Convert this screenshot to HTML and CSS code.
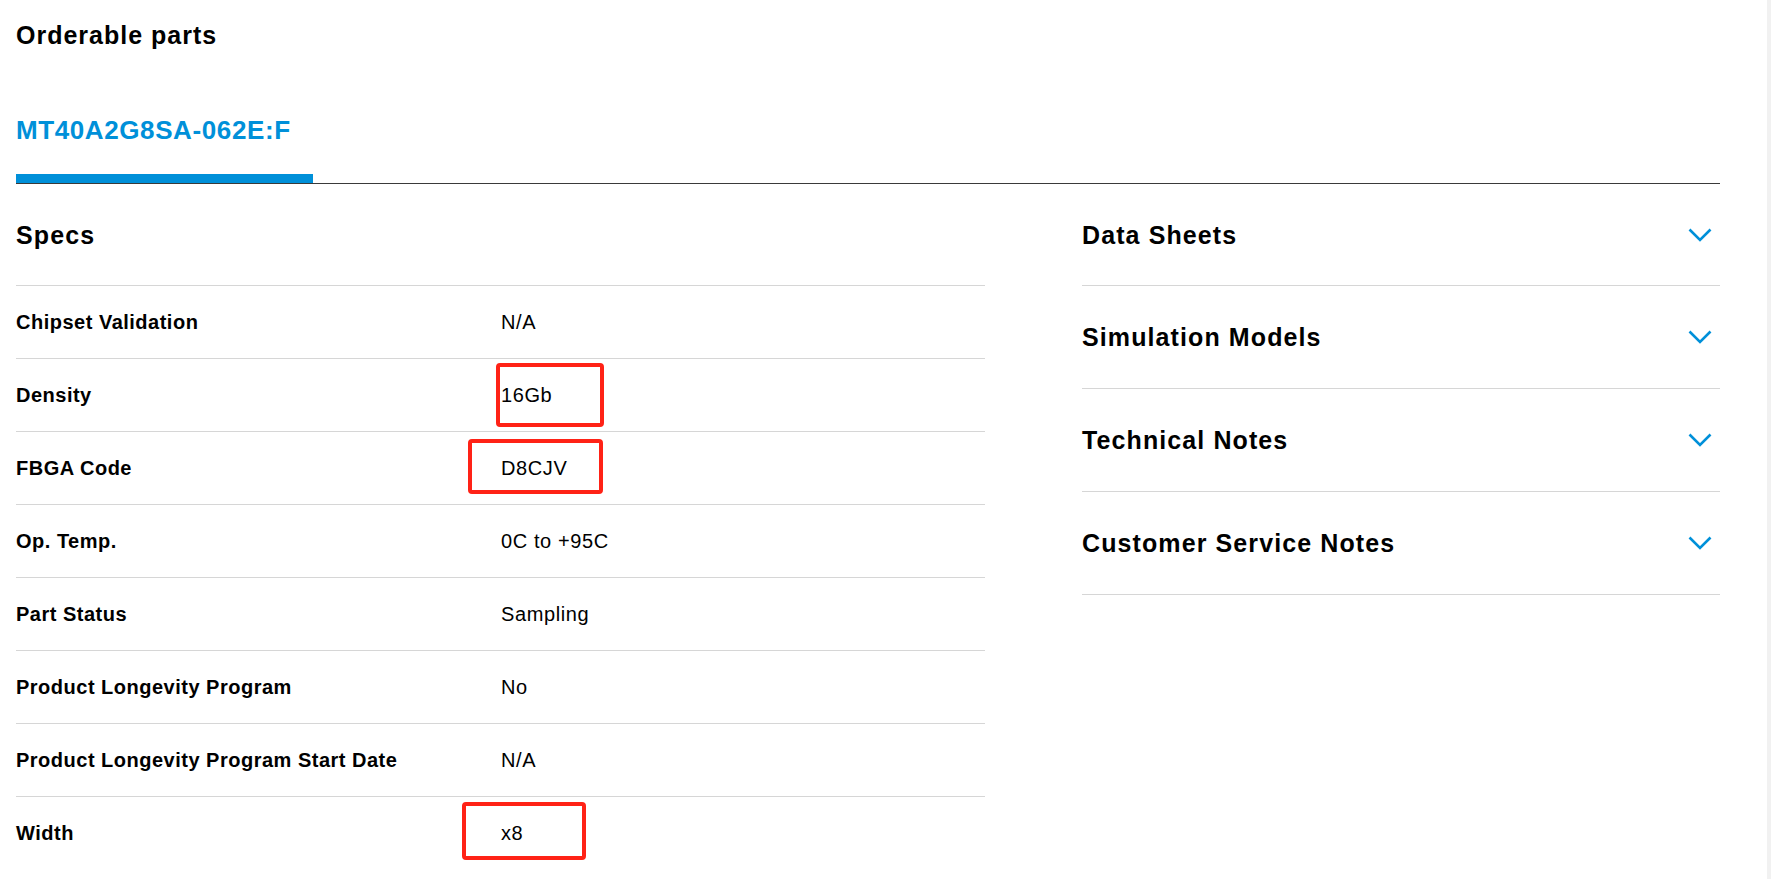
FILE: index.html
```html
<!DOCTYPE html>
<html>
<head>
    <title>Orderable parts</title>
    <link rel="stylesheet" href="styles.css">
</head>
<body>
    <div class="page">
        <h1 class="title">Orderable parts</h1>

        <div class="tabs">
            <a href="#" class="tab active">MT40A2G8SA-062E:F</a>
        </div>

        <div class="details">
            <div class="specs">
                <div class="section-head">
                    <h2>Specs</h2>
                </div>
                <div class="spec-row">
                    <div class="spec-label">Chipset Validation</div>
                    <div class="spec-value">N/A</div>
                </div>
                <div class="spec-row">
                    <div class="spec-label">Density</div>
                    <div class="spec-value">16Gb<span class="mark mark-density"></span></div>
                </div>
                <div class="spec-row">
                    <div class="spec-label">FBGA Code</div>
                    <div class="spec-value">D8CJV<span class="mark mark-fbga"></span></div>
                </div>
                <div class="spec-row">
                    <div class="spec-label">Op. Temp.</div>
                    <div class="spec-value">0C to +95C</div>
                </div>
                <div class="spec-row">
                    <div class="spec-label">Part Status</div>
                    <div class="spec-value">Sampling</div>
                </div>
                <div class="spec-row">
                    <div class="spec-label">Product Longevity Program</div>
                    <div class="spec-value">No</div>
                </div>
                <div class="spec-row">
                    <div class="spec-label">Product Longevity Program Start Date</div>
                    <div class="spec-value">N/A</div>
                </div>
                <div class="spec-row">
                    <div class="spec-label">Width</div>
                    <div class="spec-value">x8<span class="mark mark-width"></span></div>
                </div>
            </div>

            <div class="docs">
                <div class="acc-item">
                    <h2>Data Sheets</h2>
                    <svg class="chevron" viewBox="0 0 24 14"><polyline points="1.5,1.5 12,12 22.5,1.5"/></svg>
                </div>
                <div class="acc-item">
                    <h2>Simulation Models</h2>
                    <svg class="chevron" viewBox="0 0 24 14"><polyline points="1.5,1.5 12,12 22.5,1.5"/></svg>
                </div>
                <div class="acc-item">
                    <h2>Technical Notes</h2>
                    <svg class="chevron" viewBox="0 0 24 14"><polyline points="1.5,1.5 12,12 22.5,1.5"/></svg>
                </div>
                <div class="acc-item">
                    <h2>Customer Service Notes</h2>
                    <svg class="chevron" viewBox="0 0 24 14"><polyline points="1.5,1.5 12,12 22.5,1.5"/></svg>
                </div>
            </div>
        </div>
    </div>
</body>
</html>
```

FILE: styles.css
```css
html {
    background-color: #f1f1f1;
}
body {
    font-family: "Liberation Sans", Arial, sans-serif;
    margin: 0 4px 0 0;
    padding: 0;
    min-height: 879px;
    background-color: #fff;
    color: #000;
}
.page {
    padding: 0 47px 0 16px;
}
.title {
    margin: 20px 0 0;
    font-size: 25px;
    line-height: 30px;
    letter-spacing: 1px;
    font-weight: bold;
}
.tabs {
    margin-top: 64px;
    border-bottom: 1px solid #3a3a3a;
    display: flex;
}
.tab {
    display: block;
    width: 297px;
    padding-bottom: 28px;
    font-size: 26px;
    line-height: 32px;
    letter-spacing: 0.6px;
    font-weight: bold;
    color: #0090d9;
    text-decoration: none;
    border-bottom: 9px solid transparent;
}
.tab.active {
    border-bottom-color: #0090d9;
}
.details {
    display: grid;
    grid-template-columns: 969px 1fr;
    column-gap: 97px;
}
h2 {
    margin: 0;
    font-size: 25px;
    line-height: 30px;
    letter-spacing: 1.1px;
    font-weight: bold;
}
.section-head {
    height: 101px;
    display: flex;
    align-items: center;
    border-bottom: 1px solid #d6d6d6;
}
.spec-row {
    display: grid;
    grid-template-columns: 484px 1fr;
    height: 72px;
    border-bottom: 1px solid #d6d6d6;
    font-size: 20px;
}
.spec-row:last-child {
    border-bottom: none;
}
.spec-label,
.spec-value {
    display: flex;
    align-items: center;
}
.spec-label {
    font-weight: bold;
    letter-spacing: 0.5px;
}
.spec-value {
    position: relative;
    padding-left: 1px;
    letter-spacing: 0.6px;
}
/* red annotation boxes from the screenshot */
.mark {
    position: absolute;
    border: 4.5px solid #ff2216;
    border-radius: 4px;
    box-sizing: border-box;
}
.mark-density {
    left: -4px;
    top: 4px;
    width: 108px;
    height: 64px;
}
.mark-fbga {
    left: -32px;
    top: 7px;
    width: 135px;
    height: 55px;
}
.mark-width {
    left: -38px;
    top: 5px;
    width: 124px;
    height: 58px;
}
.acc-item {
    height: 102px;
    display: flex;
    align-items: center;
    justify-content: space-between;
    border-bottom: 1px solid #d6d6d6;
}
.acc-item:first-child {
    height: 101px;
}
.chevron {
    width: 24px;
    height: 14px;
    margin-right: 8px;
    fill: none;
    stroke: #0090d9;
    stroke-width: 2.6;
}
```
